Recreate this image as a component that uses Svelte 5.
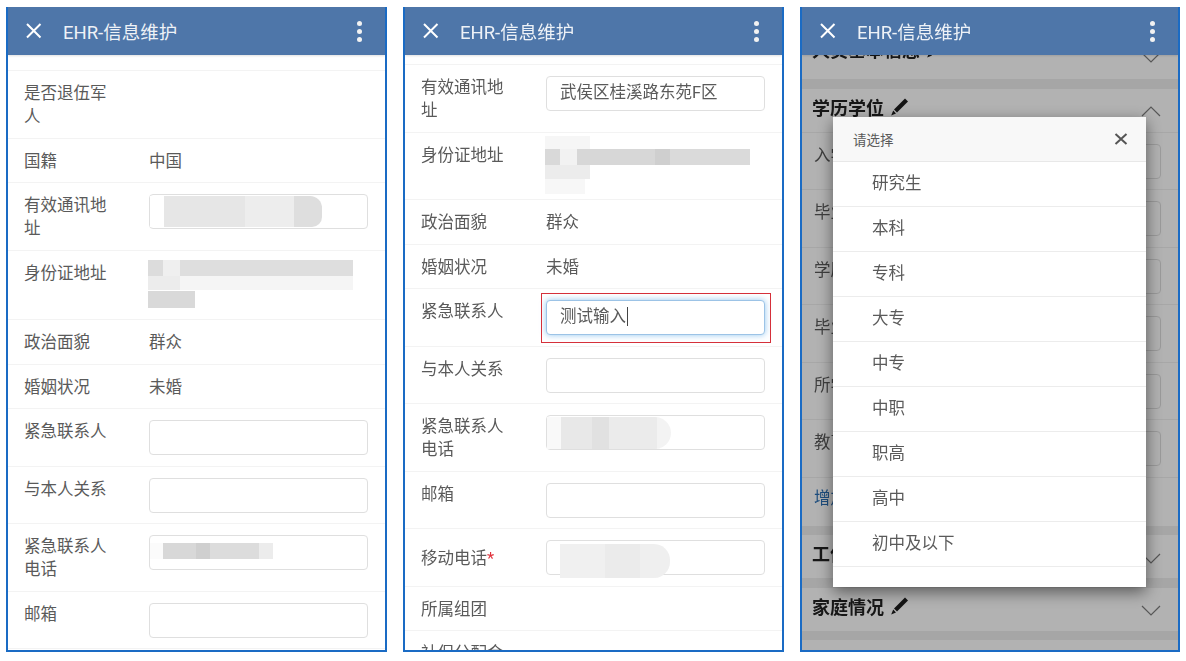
<script>
  const leftRows = [
    { label: "是否退伍军人", tall: true },
    { label: "国籍", value: "中国" },
    { label: "有效通讯地址", input: "", mask: "m-addr" },
    { label: "身份证地址", mask: "m-id", tall: true, high: true },
    { label: "政治面貌", value: "群众" },
    { label: "婚姻状况", value: "未婚" },
    { label: "紧急联系人", input: "" },
    { label: "与本人关系", input: "" },
    { label: "紧急联系人电话", input: "", mask: "m-tel" },
    { label: "邮箱", input: "" }
  ];

  const midRows = [
    { label: "有效通讯地址", input: "武侯区桂溪路东苑F区" },
    { label: "身份证地址", mask: "m-id2", tall: true },
    { label: "政治面貌", value: "群众" },
    { label: "婚姻状况", value: "未婚" },
    { label: "紧急联系人", input: "测试输入", focus: true },
    { label: "与本人关系", input: "" },
    { label: "紧急联系人电话", input: "", mask: "m-tel2" },
    { label: "邮箱", input: "" },
    { label: "移动电话", required: true, input: "", mask: "m-mobile", mid: true },
    { label: "所属组团" },
    { label: "社保分配金" }
  ];

  const eduRows = ["入学时间", "毕业时间", "学历", "毕业院校", "所学专业", "教育类型"];
  const options = ["研究生", "本科", "专科", "大专", "中专", "中职", "职高", "高中", "初中及以下"];
</script>

{#snippet header()}
  <header class="bar">
    <svg class="close" width="16" height="16" viewBox="0 0 16 16">
      <path d="M1 1 14.5 14.5M14.5 1 1 14.5" stroke="#fff" stroke-width="2" fill="none" />
    </svg>
    <span class="title">EHR-信息维护</span>
    <span class="dots"><i></i><i></i><i></i></span>
  </header>
{/snippet}

{#snippet row(r)}
  <div class="row" class:mid={r.mid}>
    <div class="label">{r.label}{#if r.required}<em>*</em>{/if}</div>
    <div class="val" class:tall={r.tall} class:high={r.high}>
      {#if r.input !== undefined}
        <div class="input" class:focus={r.focus}>
          {r.input}{#if r.focus}<span class="caret"></span>{/if}
        </div>
        {#if r.focus}<span class="redbox"></span>{/if}
      {:else if r.value}
        {r.value}
      {/if}
      {#if r.mask}<span class="mask {r.mask}"></span>{/if}
    </div>
  </div>
{/snippet}

{#snippet pencil()}
  <svg class="pencil" width="19" height="20" viewBox="0 0 19 20">
    <path d="M15 1.5 18 4.5 7 15.5 4 12.5Z" fill="#1d1d1d" />
    <path d="M3.2 13.6 6 16.4 1.2 18.4Z" fill="#1d1d1d" />
  </svg>
{/snippet}

{#snippet chevron(up)}
  <svg class="chev" width="20" height="11" viewBox="0 0 20 11">
    <path d={up ? "M1 10 10 1 19 10" : "M1 1 10 10 19 1"} stroke="#7d7d7d" stroke-width="1.2" fill="none" />
  </svg>
{/snippet}

<div class="page">
  <section class="phone">
    {@render header()}
    <div class="scroll first">
      {#each leftRows as r}{@render row(r)}{/each}
    </div>
  </section>

  <section class="phone">
    {@render header()}
    <div class="scroll second">
      {#each midRows as r}{@render row(r)}{/each}
    </div>
  </section>

  <section class="phone last">
    {@render header()}
    <div class="scroll third">
      <div class="sec"><b>人员基本信息</b>{@render pencil()}{@render chevron(false)}</div>
      <div class="band"></div>
      <div class="sec"><b>学历学位</b>{@render pencil()}{@render chevron(true)}</div>
      {#each eduRows as label}
        <div class="row">
          <div class="label">{label}</div>
          <div class="val"><div class="input"></div></div>
        </div>
      {/each}
      <div class="add">增加学历</div>
      <div class="band"></div>
      <div class="sec"><b>工作经历</b>{@render pencil()}{@render chevron(false)}</div>
      <div class="band"></div>
      <div class="sec"><b>家庭情况</b>{@render pencil()}{@render chevron(false)}</div>
      <div class="band"></div>
    </div>
    <div class="shade"></div>
    <div class="modal">
      <div class="modal-head">
        <span>请选择</span>
        <svg width="14" height="14" viewBox="0 0 14 14">
          <path d="M1.5 2 12.5 12M12.5 2 1.5 12" stroke="#555" stroke-width="2" fill="none" />
        </svg>
      </div>
      <ul>
        {#each options as o}<li>{o}</li>{/each}
      </ul>
    </div>
  </section>
</div>

<style>
  :global(body) {
    background: #fff;
  }

  .page {
    display: flex;
    gap: 16px;
    padding: 7px 0 0 6px;
    font-family: Roboto, "Noto Sans CJK SC", sans-serif;
    color: #5a5a5a;
    filter: blur(0.5px);
  }

  .phone {
    position: relative;
    width: 381px;
    height: 645px;
    box-sizing: border-box;
    border: 2px solid #1a6bc4;
    border-top: 0;
    overflow: hidden;
    background: #fff;
  }

  .phone.last {
    width: 380px;
  }

  .bar {
    position: relative;
    z-index: 3;
    height: 48px;
    display: flex;
    align-items: center;
    padding: 0 18px 0 18px;
    background: #4e76a9;
    color: #eef2f7;
    box-shadow: 0 1px 2px rgba(0, 0, 0, 0.12);
  }

  .close {
    margin-right: 21px;
  }

  .title {
    font-size: 18.5px;
    flex: 1;
  }

  .dots {
    display: flex;
    flex-direction: column;
    gap: 3px;
    margin-right: 5px;
  }

  .dots i {
    width: 5px;
    height: 5px;
    border-radius: 50%;
    background: #f2f2f2;
  }

  .scroll {
    font-size: 16.5px;
    line-height: 23px;
  }

  .first {
    padding-top: 15px;
  }

  .second {
    padding-top: 9px;
  }

  .first > :first-child,
  .second > :first-child {
    border-top: 1px solid #f3f3f3;
  }

  .row {
    display: flex;
    padding: 11px 17px 9.5px 16px;
    border-bottom: 1px solid #f3f3f3;
  }

  .row.mid {
    align-items: center;
  }

  .label {
    width: 95px;
    margin-right: 30px;
    flex: none;
  }

  .label em {
    color: #e0323c;
    font-style: normal;
  }

  .val {
    position: relative;
    flex: 1;
    min-height: 23px;
  }

  .val.tall {
    min-height: 46px;
  }

  .val.high {
    min-height: 48px;
  }

  .input {
    box-sizing: border-box;
    height: 35px;
    margin-bottom: 1px;
    padding: 0 13px;
    border: 1.5px solid #dfdfdf;
    border-radius: 4px;
    line-height: 32px;
    background: #fff;
  }

  .input.focus {
    border-color: #9cc3e6;
    box-shadow: 0 0 6px rgba(102, 175, 233, 0.7);
  }

  .caret {
    display: inline-block;
    width: 1px;
    height: 19px;
    margin-left: 1px;
    vertical-align: -4px;
    background: #444;
  }

  .redbox {
    position: absolute;
    top: -7px;
    left: -5px;
    right: -6px;
    bottom: -7px;
    border: 1px solid #d5303a;
    pointer-events: none;
  }

  .mask {
    position: absolute;
    display: block;
  }

  .m-addr {
    top: 2px;
    left: 1px;
    width: 172px;
    height: 31px;
    border-radius: 0 12px 10px 0;
    background:
      linear-gradient(90deg, #fff 0 14px, transparent 14px),
      linear-gradient(90deg, #e6e6e6 0 55%, #ededed 55% 84%, #dedede 84%);
  }

  .m-id {
    top: -2px;
    left: -1px;
    width: 205px;
    height: 48px;
    background:
      linear-gradient(90deg, #d9d9d9 0 47px, #0000 47px) 0 31px / 100% 17px no-repeat,
      linear-gradient(90deg, #ececec 0 32px, #f5f5f5 32px) 0 16px / 100% 14px no-repeat,
      linear-gradient(90deg, #dcdcdc 0 15px, #efefef 15px 32px, #dedede 32px) 0 0 / 100% 16px no-repeat;
  }

  .m-tel {
    top: 8px;
    left: 14px;
    width: 110px;
    height: 16px;
    background: linear-gradient(90deg, #d8d8d8 0 30%, #cfcfcf 30% 43%, #dcdcdc 43% 87%, #ececec 87%);
    box-shadow: -13px 0 0 #fbfbfb;
  }

  .m-id2 {
    top: -8px;
    left: -1px;
    width: 205px;
    height: 58px;
    background:
      linear-gradient(90deg, #f6f6f6 0 45px, #0000 45px) 0 0 / 100% 13px no-repeat,
      linear-gradient(90deg, #d9d9d9 0 15px, #f2f2f2 15px 32px, #d7d7d7 32px 110px, #cfcfcf 110px 125px, #dadada 125px 205px) 0 13px / 100% 16px no-repeat,
      linear-gradient(90deg, #ececec 0 45px, #0000 45px) 0 29px / 100% 14px no-repeat,
      linear-gradient(90deg, #f7f7f7 0 40px, #0000 40px) 0 43px / 100% 15px no-repeat;
  }

  .m-tel2 {
    top: 2px;
    left: 1px;
    width: 124px;
    height: 32px;
    border-radius: 0 16px 16px 0;
    background: linear-gradient(90deg, #f9f9f9 0 14px, #e8e8e8 14px 45px, #e1e1e1 45px 62px, #ebebeb 62px 110px, #f3f3f3 110px);
  }

  .m-mobile {
    top: 4px;
    left: 14px;
    width: 110px;
    height: 34px;
    border-radius: 0 16px 16px 0;
    background: linear-gradient(90deg, #f0f0f0 0 45px, #ebebeb 45px 80px, #efefef 80px);
  }

  .third {
    margin-top: -25px;
  }

  .sec {
    display: flex;
    align-items: center;
    height: 43px;
    padding: 0 17px 0 10px;
    box-sizing: border-box;
    color: #222;
  }

  .third > .sec:first-child {
    height: 49px;
    padding-bottom: 5px;
  }

  .third > .sec:first-child .chev {
    margin-top: 11px;
  }

  .sec b {
    font-size: 18px;
    font-weight: 700;
    margin-top: -4px;
  }

  .pencil {
    margin: -6px 0 0 6px;
  }

  .chev {
    margin-left: auto;
    margin-top: 3px;
  }

  .band {
    height: 9.5px;
    background: #eee;
  }

  .third .sec + .row {
    border-top: 1px solid #f0f0f0;
  }

  .third .row {
    padding-left: 12px;
    border-bottom-color: #f0f0f0;
  }

  .add {
    height: 48px;
    padding: 9px 12px;
    box-sizing: border-box;
    color: #2a6fb5;
  }

  .shade {
    position: absolute;
    z-index: 1;
    inset: 0;
    background: rgba(0, 0, 0, 0.3);
  }

  .modal {
    position: absolute;
    z-index: 2;
    top: 110px;
    left: 31px;
    width: 313px;
    height: 470px;
    background: #fff;
    box-shadow: 0 5px 15px rgba(0, 0, 0, 0.5);
  }

  .modal-head {
    display: flex;
    align-items: center;
    justify-content: space-between;
    height: 45px;
    box-sizing: border-box;
    padding: 0 18px 0 20px;
    background: #f8f8f8;
    font-size: 13.5px;
    border-bottom: 1px solid #e8e8e8;
  }

  ul {
    list-style: none;
    margin: 0;
    padding: 0;
    font-size: 16.5px;
  }

  li {
    height: 45px;
    box-sizing: border-box;
    padding: 10px 0 0 39px;
    line-height: 23px;
    border-bottom: 1.5px solid #ececec;
  }
</style>
